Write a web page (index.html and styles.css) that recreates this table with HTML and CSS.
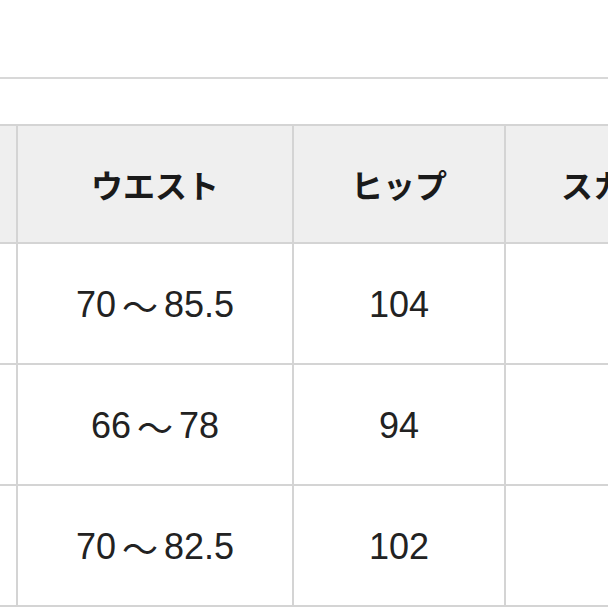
FILE: index.html
```html
<!DOCTYPE html>
<html lang="ja">
<head>
<meta charset="utf-8">
<link rel="stylesheet" href="styles.css">
</head>
<body>
<div class="page">
  <div class="rule"></div>
  <div class="sheet">
    <div class="cell head"></div>
    <div class="cell head">ウエスト</div>
    <div class="cell head">ヒップ</div>
    <div class="cell head">スカート丈</div>

    <div class="cell"></div>
    <div class="cell">70<span class="tilde">～</span>85.5</div>
    <div class="cell">104</div>
    <div class="cell"></div>

    <div class="cell"></div>
    <div class="cell">66<span class="tilde">～</span>78</div>
    <div class="cell">94</div>
    <div class="cell"></div>

    <div class="cell"></div>
    <div class="cell">70<span class="tilde">～</span>82.5</div>
    <div class="cell">102</div>
    <div class="cell"></div>
  </div>
</div>
</body>
</html>
```
FILE: styles.css
```css
html, body {
  margin: 0;
  padding: 0;
  background: #ffffff;
  overflow: hidden;
}
.page {
  width: 608px;
  height: 608px;
  overflow: hidden;
  padding-top: 77px;
  box-sizing: border-box;
}
.rule {
  border-top: 2px solid #d8d8d8;
  height: 45px;
}
.sheet {
  display: grid;
  grid-template-columns: 200px 274px 210px 270px;
  grid-template-rows: 116px 119px 119px 119px;
  gap: 2px;
  padding: 2px 0;
  background: #d4d4d4;
  margin-left: -184px;
  width: max-content;
}
.cell {
  background: #ffffff;
  display: flex;
  align-items: center;
  justify-content: center;
  font-family: "Liberation Sans", "Noto Sans CJK JP", sans-serif;
  font-size: 36px;
  color: #222222;
  padding-top: 3px;
  box-sizing: border-box;
}
.tilde {
  margin: 0 6px;
}
.head {
  background: #efefef;
  font-family: "Noto Sans CJK JP", sans-serif;
  font-weight: 700;
  font-size: 32px;
  color: #1a1a1a;
  padding-top: 0;
}
```
